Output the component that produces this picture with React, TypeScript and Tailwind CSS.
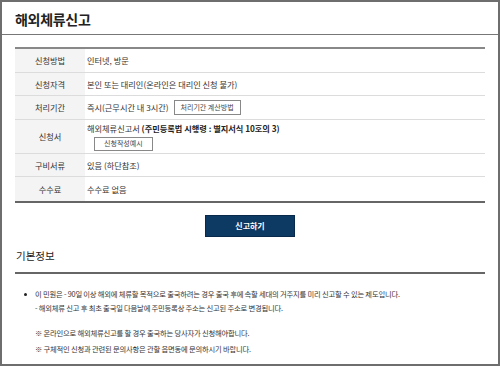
import React from "react";

export default function App() {
  const font = "font-['Noto_Sans_CJK_KR','Noto_Sans',sans-serif]";
  return (
    <div className={`w-[500px] h-[366px] border-2 border-[#6e6e6e] bg-white overflow-hidden text-[#333] ${font}`}>
      <div className="pl-[13px] pt-[8px] pb-[6px] border-b border-[#777] ml-0">
        <h1 className="text-[14px] font-bold leading-[18px] text-[#222] tracking-[-0.3px]">해외체류신고</h1>
      </div>
      <div className="mx-[13px] mt-[12px] border-t-2 border-b-2 border-t-[#888] border-b-[#666]">
        <Row label="신청방법" h="h-[24px]">
          <span>인터넷, 방문</span>
        </Row>
        <Row label="신청자격" h="h-[23px]">
          <span>본인 또는 대리인(온라인은 대리인 신청 불가)</span>
        </Row>
        <Row label="처리기간" h="h-[24px]">
          <div className="flex items-center gap-[5px]">
            <span>즉시(근무시간 내 3시간)</span>
            <span className="border border-[#888] h-[15px] px-[6px] flex items-center text-[7px] text-[#444]">처리기간 계산방법</span>
          </div>
        </Row>
        <Row label="신청서" h="h-[34px]">
          <div className="flex flex-col items-start gap-[2px]">
            <span>
              해외체류신고서 <b className="font-bold text-[#222]">(주민등록법 시행령 : 별지서식 10호의 3)</b>
            </span>
            <span className="ml-[7px] border border-[#888] h-[14px] px-[9px] flex items-center text-[7px] text-[#444]">신청작성예시</span>
          </div>
        </Row>
        <Row label="구비서류" h="h-[23px]">
          <span>있음 (하단참조)</span>
        </Row>
        <Row label="수수료" h="h-[24px]" last>
          <span>수수료 없음</span>
        </Row>
      </div>
      <div className="flex justify-center mt-[12px]">
        <button className="w-[90px] h-[22px] bg-[#0d3a63] border border-[#08294a] text-white text-[8px] font-bold flex items-center justify-center">
          신고하기
        </button>
      </div>
      <div className="mx-[13px] mt-[12px] pb-[9px] border-b-2 border-[#666]">
        <h2 className="text-[10.5px] leading-[14px] text-[#222] pl-[1px]">기본정보</h2>
      </div>
      <div className="mx-[13px] pt-[13px] text-[7.3px] leading-[14px] text-[#333] tracking-[-0.2px]">
        <div className="flex items-start">
          <span className="w-[20px] h-[14px] flex justify-center items-center shrink-0">
            <span className="w-[3px] h-[3px] rounded-full bg-[#222]"></span>
          </span>
          <div>
            <div>이 민원은 - 90일 이상 해외에 체류할 목적으로 출국하려는 경우 출국 후에 속할 세대의 거주지를 미리 신고할 수 있는 제도입니다.</div>
            <div>- 해외체류 신고 후 최초 출국일 다음날에 주민등록상 주소는 신고된 주소로 변경됩니다.</div>
          </div>
        </div>
        <div className="pl-[20px] mt-[11px]">
          <div>※ 온라인으로 해외체류신고를 할 경우 출국하는 당사자가 신청해야합니다.</div>
          <div className="mt-[2px]">※ 구체적인 신청과 관련된 문의사항은 관할 읍면동에 문의하시기 바랍니다.</div>
        </div>
      </div>
    </div>
  );
}

function Row({ label, h, children, last }: { label: string; h: string; children: React.ReactNode; last?: boolean }) {
  return (
    <div className={`grid grid-cols-[70px_1fr] ${h} ${last ? "" : "border-b border-[#dcdcdc]"} text-[8.2px]`}>
      <div className="bg-[#f4f4f4] flex items-center justify-center text-[#333]">{label}</div>
      <div className="flex items-center pl-[2px] text-[#333]">{children}</div>
    </div>
  );
}
